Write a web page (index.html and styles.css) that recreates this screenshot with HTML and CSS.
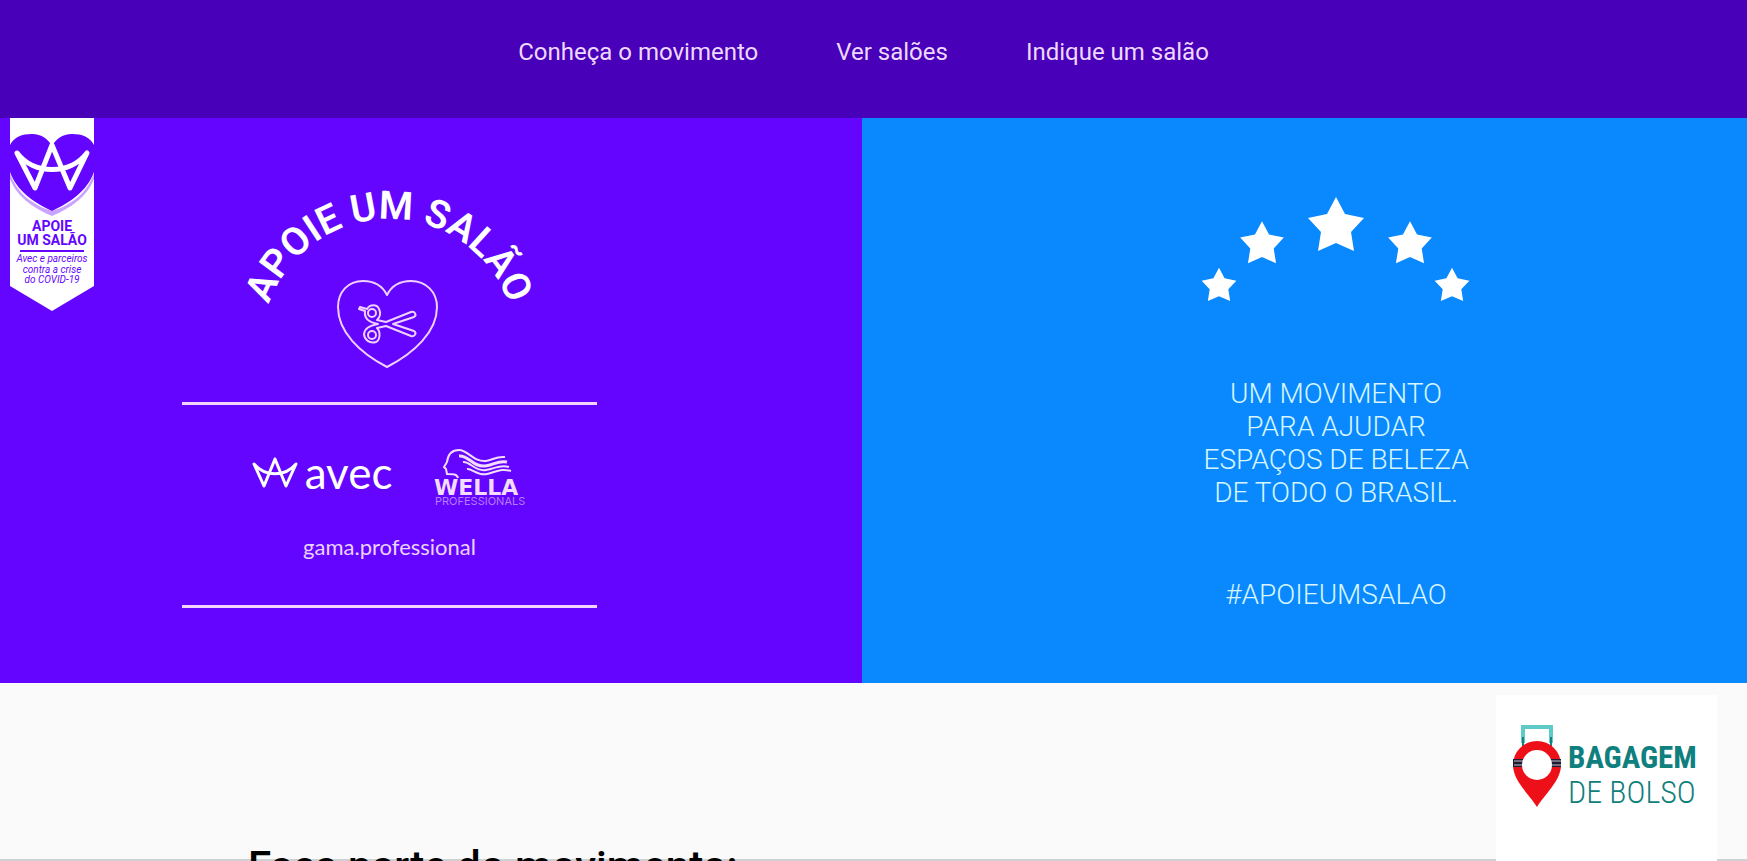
FILE: index.html
```
<!DOCTYPE html>
<html lang="pt-BR">
<head>
    <meta charset="UTF-8">
    <meta name="viewport" content="width=device-width, initial-scale=1.0">
    <title>Apoie um Salão</title>
    <link rel="stylesheet" href="styles.css">
</head>
<body>

<header>
    <nav class="menu">
        <a href="#movimento">Conheça o movimento</a>
        <a href="#saloes">Ver salões</a>
        <a href="#indique">Indique um salão</a>
    </nav>
</header>

<main class="hero">
    <section class="hero-left">
        <svg class="ribbon" width="84" height="194" viewBox="0 0 84 194">
            <path d="M0 0H84V168L42 193L0 168Z" fill="#fff"/>
            <path d="M0 55C6 74 22 87 42 93C62 87 78 74 84 55V61C78 77 62 90 42 98C22 90 6 77 0 61Z" fill="#c9a3ff"/>
            <path d="M0 27C4 19 12 16 22 16C32 16 38 21 42 28C46 21 52 16 62 16C72 16 80 19 84 27V54C77 73 61 84 42 93C23 84 7 73 0 54Z" fill="#6405ff"/>
            <path d="M25 70L7 35C24 57 60 57 77 35L60 70L42 27Z" fill="none" stroke="#fff" stroke-width="5" stroke-linejoin="round"/>
            <g fill="#6405ff" text-anchor="middle">
                <text x="42" y="113" class="ribbon-title">APOIE</text>
                <text x="42" y="127" class="ribbon-title">UM SALÃO</text>
                <rect x="10" y="132" width="64" height="2"/>
                <text x="42" y="144" class="ribbon-text">Avec e parceiros</text>
                <text x="42" y="155" class="ribbon-text">contra a crise</text>
                <text x="42" y="165" class="ribbon-text">do COVID-19</text>
            </g>
        </svg>

        <svg class="emblem" width="320" height="210" viewBox="0 0 320 210">
            <path id="arc" d="M32 176A127 127 0 0 1 286 176" fill="none"/>
            <text class="emblem-text"><textPath href="#arc" startOffset="50%" text-anchor="middle">APOIE UM SALÃO</textPath></text>
            <g fill="none" stroke="#f0d0ff" stroke-width="2" stroke-linejoin="round">
                <path d="M157 125C152 115 143 111 133 111C118 111 108 122 108 137C108 162 130 183 157 197C184 183 207 162 207 137C207 122 196 111 181 111C171 111 162 115 157 125Z"/>
                <circle cx="142" cy="143" r="4"/>
                <circle cx="142" cy="165" r="4"/>
                <path d="M135 141L129 139L130 137L137 139C140 134 147 134 149 139C151 143 150 147 147 150L156 152L181 142C185 141 187 145 184 147L163 154L184 161C187 163 185 167 181 166L156 156L147 158C151 162 150 170 146 172C139 174 134 169 134 164C135 158 139 156 148 154C137 152 134 147 135 141Z"/>
            </g>
        </svg>

        <div class="partners">
            <div class="partners-row">
                <div class="avec">
                    <svg width="48" height="34" viewBox="0 0 48 34">
                        <path d="M13 31L3 9C14 22 34 22 45 9L35 31L24 4Z" fill="none" stroke="#fff" stroke-width="3" stroke-linejoin="round"/>
                    </svg>
                    <span>avec</span>
                </div>
                <svg width="98" height="60" viewBox="0 0 98 60">
                    <g fill="none" stroke="#f3dcff" stroke-width="2">
                        <path d="M28 31C27 27 23 27 17 27L16 22L14 20L17 15C18 7 22 3 29 3C38 3 43 15 56 14C63 13 66 9 75 10"/>
                        <path d="M29 9C39 8 42 20 55 19C64 18 68 13 77 15" stroke-width="3"/>
                        <path d="M33 15C40 14 45 25 56 23C65 22 69 17 79 20"/>
                        <path d="M37 22C42 21 47 29 57 27C66 25 71 21 81 24"/>
                    </g>
                    <text x="4" y="48" class="wella">WELLA</text>
                    <text x="5" y="58" class="wella-sub">PROFESSIONALS</text>
                </svg>
            </div>
            <span class="gama">gama.professional</span>
        </div>
    </section>

    <section class="hero-right">
        <svg class="stars" width="270" height="106" viewBox="0 0 270 106" fill="#fff">
            <defs>
                <path id="star" d="M0 -28L9 -11L28 -7L15 7L18 26L0 18L-18 26L-15 7L-28 -7L-9 -11Z"/>
            </defs>
            <use href="#star" transform="translate(135 29)"/>
            <use href="#star" transform="translate(61 47) scale(0.78)"/>
            <use href="#star" transform="translate(209 47) scale(0.78)"/>
            <use href="#star" transform="translate(18 89) scale(0.62)"/>
            <use href="#star" transform="translate(251 89) scale(0.62)"/>
        </svg>
        <p class="lead">UM MOVIMENTO<br>PARA AJUDAR<br>ESPAÇOS DE BELEZA<br>DE TODO O BRASIL.</p>
        <p class="lead">#APOIEUMSALAO</p>
    </section>
</main>

<section class="join">
    <h2>Faça parte do movimento:</h2>
</section>

<aside class="brand">
    <svg width="50" height="84" viewBox="0 0 50 84">
        <path d="M11 18V2H39V18" fill="none" stroke="#5fcbc8" stroke-width="4"/>
        <path d="M11 12V22M39 12V22" stroke="#16807f" stroke-width="2"/>
        <path d="M25 82C18 70 1 56 1 40A24 24 0 0 1 49 40C49 56 32 70 25 82Z" fill="#ee1018"/>
        <path d="M1 34H49V42H1Z" fill="#1d1d35"/>
        <path d="M2 36H49M2 40H49" stroke="#c9c0cc"/>
        <circle cx="25" cy="40" r="15" fill="#fff"/>
    </svg>
    <div class="brand-name">
        <strong>BAGAGEM</strong>
        <span>DE BOLSO</span>
    </div>
</aside>

</body>
</html>
```
FILE: styles.css
```
* {
    box-sizing: border-box;
}

body {
    font-family: Roboto, "Liberation Sans", sans-serif;
    background-color: #fafafa;
    margin: 0;
    height: 100vh;
    display: flex;
    flex-direction: column;
    overflow: hidden;
}

header {
    background-color: #4800b8;
    padding: 37px 20px 51px 0;
}

.menu {
    display: flex;
    justify-content: center;
    gap: 78px;
}

.menu a {
    color: #eed9ff;
    font-size: 24px;
    line-height: 30px;
    text-decoration: none;
}

.hero {
    display: flex;
    flex-shrink: 0;
    color: white;
}

.hero-left {
    position: relative;
    width: 49.35%;
    background-color: #6405ff;
    padding: 52px 83px 72px 0;
    display: flex;
    flex-direction: column;
    align-items: center;
}

.ribbon {
    position: absolute;
    top: 0;
    left: 10px;
}

.ribbon-title {
    font-size: 14px;
    font-weight: bold;
}

.ribbon-text {
    font-size: 10px;
    font-style: italic;
}

.emblem-text {
    font-size: 39px;
    font-weight: 600;
    fill: white;
}

.partners {
    width: 415px;
    margin-top: 22px;
    padding: 42px 0 44px;
    border-top: 3px solid #f3d4ff;
    border-bottom: 3px solid #f3d4ff;
    display: flex;
    flex-direction: column;
    align-items: center;
    gap: 26px;
}

.partners-row {
    display: flex;
    align-items: flex-start;
    gap: 38px;
}

.avec {
    display: flex;
    align-items: center;
    gap: 6px;
    font-family: Lato, sans-serif;
    font-size: 44px;
    line-height: 50px;
}

.wella {
    font-family: "DejaVu Sans", sans-serif;
    font-size: 22px;
    font-weight: bold;
    fill: #f3dcff;
}

.wella-sub {
    font-family: Inter, sans-serif;
    font-size: 11px;
    fill: #b47cff;
}

.gama {
    font-family: Lato, sans-serif;
    font-size: 22px;
    line-height: 28px;
    color: #ecd2ff;
}

.hero-right {
    flex: 1;
    background-color: #0a89ff;
    padding: 78px 0 72px 63px;
    display: flex;
    flex-direction: column;
    align-items: center;
}

.lead {
    margin: 0;
    font-size: 28px;
    font-weight: 300;
    line-height: 33px;
    color: #d6f6ff;
    text-align: center;
}

.stars {
    margin-bottom: 75px;
}

.lead:not(:last-child) {
    margin-bottom: 69px;
}

.join {
    flex: 1;
    min-height: 0;
    overflow: hidden;
    padding: 160px 248px 0;
    background: linear-gradient(#cfd0d2, #cfd0d2) bottom / 100% 2px no-repeat;
}

.join h2 {
    margin: 0;
    font-size: 42px;
    font-weight: 500;
    line-height: 48px;
    color: black;
}

.brand {
    position: fixed;
    right: 30px;
    bottom: 0;
    padding: 30px 22px 52px 16px;
    background-color: white;
    display: flex;
    align-items: flex-end;
    gap: 6px;
}

.brand-name {
    display: flex;
    flex-direction: column;
    width: 127px;
    font-family: "Roboto Condensed", "Liberation Sans Narrow", Roboto, sans-serif;
    font-size: 32px;
    line-height: 34px;
    color: #0f807e;
    white-space: nowrap;
}

.brand-name strong {
    font-size: 31px;
}

.brand-name span {
    font-weight: 300;
}
```
